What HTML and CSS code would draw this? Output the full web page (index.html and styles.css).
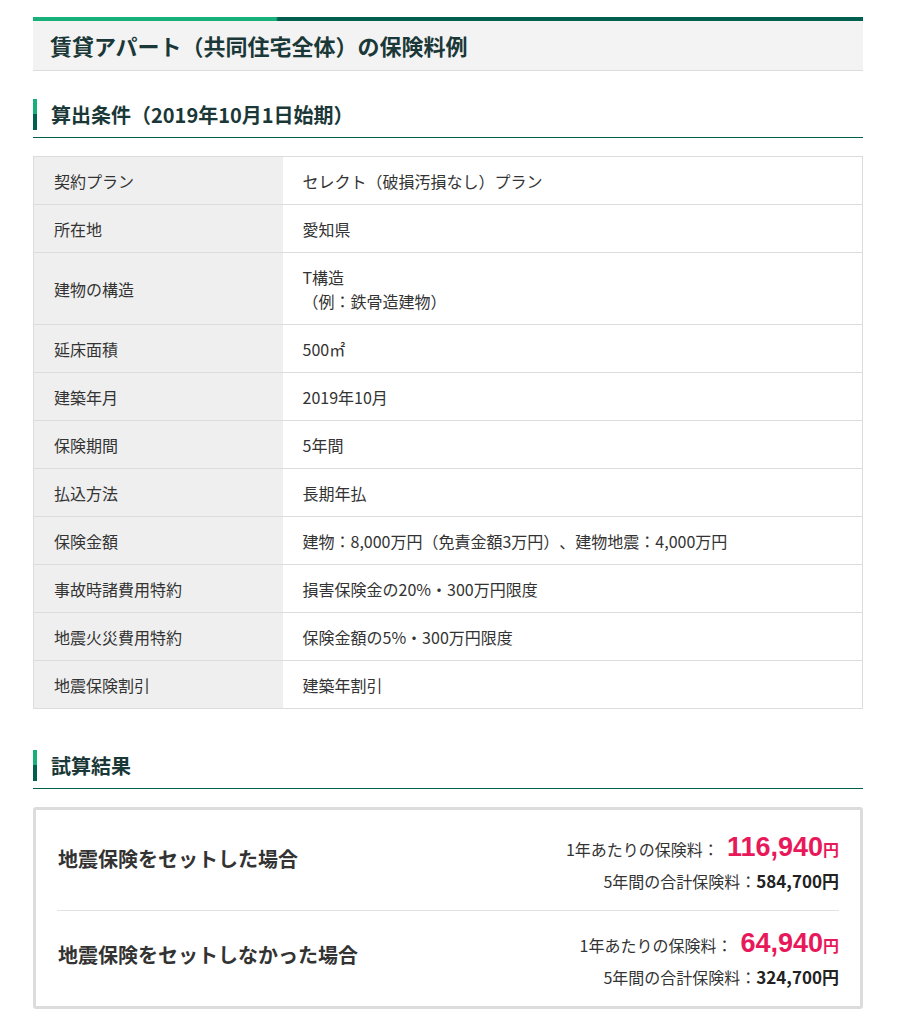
FILE: index.html
```html
<!DOCTYPE html>
<html lang="ja">
<head>
<meta charset="utf-8">
<title>賃貸アパート（共同住宅全体）の保険料例</title>
<link rel="stylesheet" href="styles.css">
</head>
<body>
<div class="page">
  <div class="topbar"></div>
  <header class="head">
    <h1 class="head-title">賃貸アパート（共同住宅全体）の保険料例</h1>
  </header>

  <section class="sec">
    <h2 class="sec-title">算出条件（2019年10月1日始期）</h2>
    <table class="cond">
      <tbody>
        <tr><th>契約プラン</th><td>セレクト（破損汚損なし）プラン</td></tr>
        <tr><th>所在地</th><td>愛知県</td></tr>
        <tr><th>建物の構造</th><td>T構造<br>（例：鉄骨造建物）</td></tr>
        <tr><th>延床面積</th><td>500㎡</td></tr>
        <tr><th>建築年月</th><td>2019年10月</td></tr>
        <tr><th>保険期間</th><td>5年間</td></tr>
        <tr><th>払込方法</th><td>長期年払</td></tr>
        <tr><th>保険金額</th><td>建物：8,000万円（免責金額3万円）、建物地震：4,000万円</td></tr>
        <tr><th>事故時諸費用特約</th><td>損害保険金の20%・300万円限度</td></tr>
        <tr><th>地震火災費用特約</th><td>保険金額の5%・300万円限度</td></tr>
        <tr><th>地震保険割引</th><td>建築年割引</td></tr>
      </tbody>
    </table>
  </section>

  <section class="sec sec-result">
    <h2 class="sec-title">試算結果</h2>
    <div class="result">
      <div class="res-row">
        <p class="res-name">地震保険をセットした場合</p>
        <div class="res-price">
          <p class="res-line">1年あたりの保険料：<span class="res-big">116,940</span><span class="res-yen">円</span></p>
          <p class="res-line">5年間の合計保険料：<b class="res-total">584,700円</b></p>
        </div>
      </div>
      <div class="res-row">
        <p class="res-name">地震保険をセットしなかった場合</p>
        <div class="res-price">
          <p class="res-line">1年あたりの保険料：<span class="res-big">64,940</span><span class="res-yen">円</span></p>
          <p class="res-line">5年間の合計保険料：<b class="res-total">324,700円</b></p>
        </div>
      </div>
    </div>
  </section>
</div>
</body>
</html>
```
FILE: styles.css
```css
* { box-sizing: border-box; }
body {
  margin: 0;
  background: #fff;
  font-family: "Noto Sans CJK JP", "Noto Sans", sans-serif;
  color: #333;
  text-spacing-trim: space-all;
}
.page {
  width: 830px;
  margin: 17px 0 0 33px;
}
.topbar {
  height: 4px;
  background: linear-gradient(to right, #17b07a 0, #17b07a 243px, #005f4f 245px, #005f4f 100%);
}
.head {
  height: 50px;
  background: #f3f3f3;
  border-bottom: 1px solid #dcdcdc;
  padding-left: 17px;
}
.head-title {
  margin: 0;
  font-size: 22px;
  font-weight: 700;
  line-height: 49px;
  color: #1b3838;
}
.sec { margin-top: 28px; }
.sec-result { margin-top: 41px; }
.sec-title {
  display: flex;
  align-items: center;
  gap: 14px;
  margin: 0;
  padding-bottom: 7px;
  border-bottom: 1px solid #005f4f;
  font-size: 20px;
  font-weight: 700;
  line-height: 31px;
  color: #1b3838;
}
.sec-title::before {
  content: "";
  width: 4px;
  height: 31px;
  flex: none;
  background: linear-gradient(#17b07a 0, #17b07a 50%, #005f4f 50%, #005f4f 100%);
}
.cond {
  width: 100%;
  margin-top: 18px;
  border-collapse: collapse;
  border: 1px solid #dcdcdc;
  font-size: 16px;
  line-height: 24px;
}
.cond th, .cond td {
  padding: 12px 20px 11px;
  border-bottom: 1px solid #dcdcdc;
  text-align: left;
  font-weight: 400;
  vertical-align: middle;
}
.cond th {
  width: 249px;
  background: #efefef;
  color: #333;
}
.cond td { background: #fff; }
.result {
  margin-top: 18px;
  border: 3px solid #dcdcdc;
  border-radius: 3px;
  padding: 5px 21px 0;
}
.res-row {
  display: flex;
  align-items: center;
  justify-content: space-between;
  padding: 18px 0 13px;
}
.res-row + .res-row { border-top: 1px solid #e2e2e2; }
.res-name {
  margin: 0 0 13px 1px;
  font-size: 20px;
  font-weight: 700;
  line-height: 30px;
  color: #333;
}
.res-price { text-align: right; }
.res-line {
  margin: 0;
  height: 32px;
  font-size: 16px;
  line-height: 32px;
  color: #333;
}
.res-big {
  font-family: "Liberation Sans", Arial, sans-serif;
  font-size: 27px;
  font-weight: 700;
  line-height: 1;
  color: #e8195a;
  margin-left: 8px;
}
.res-yen {
  font-size: 16px;
  font-weight: 700;
  line-height: 1;
  color: #e8195a;
}
.res-total {
  font-size: 17px;
  font-weight: 700;
  color: #222;
}
```
